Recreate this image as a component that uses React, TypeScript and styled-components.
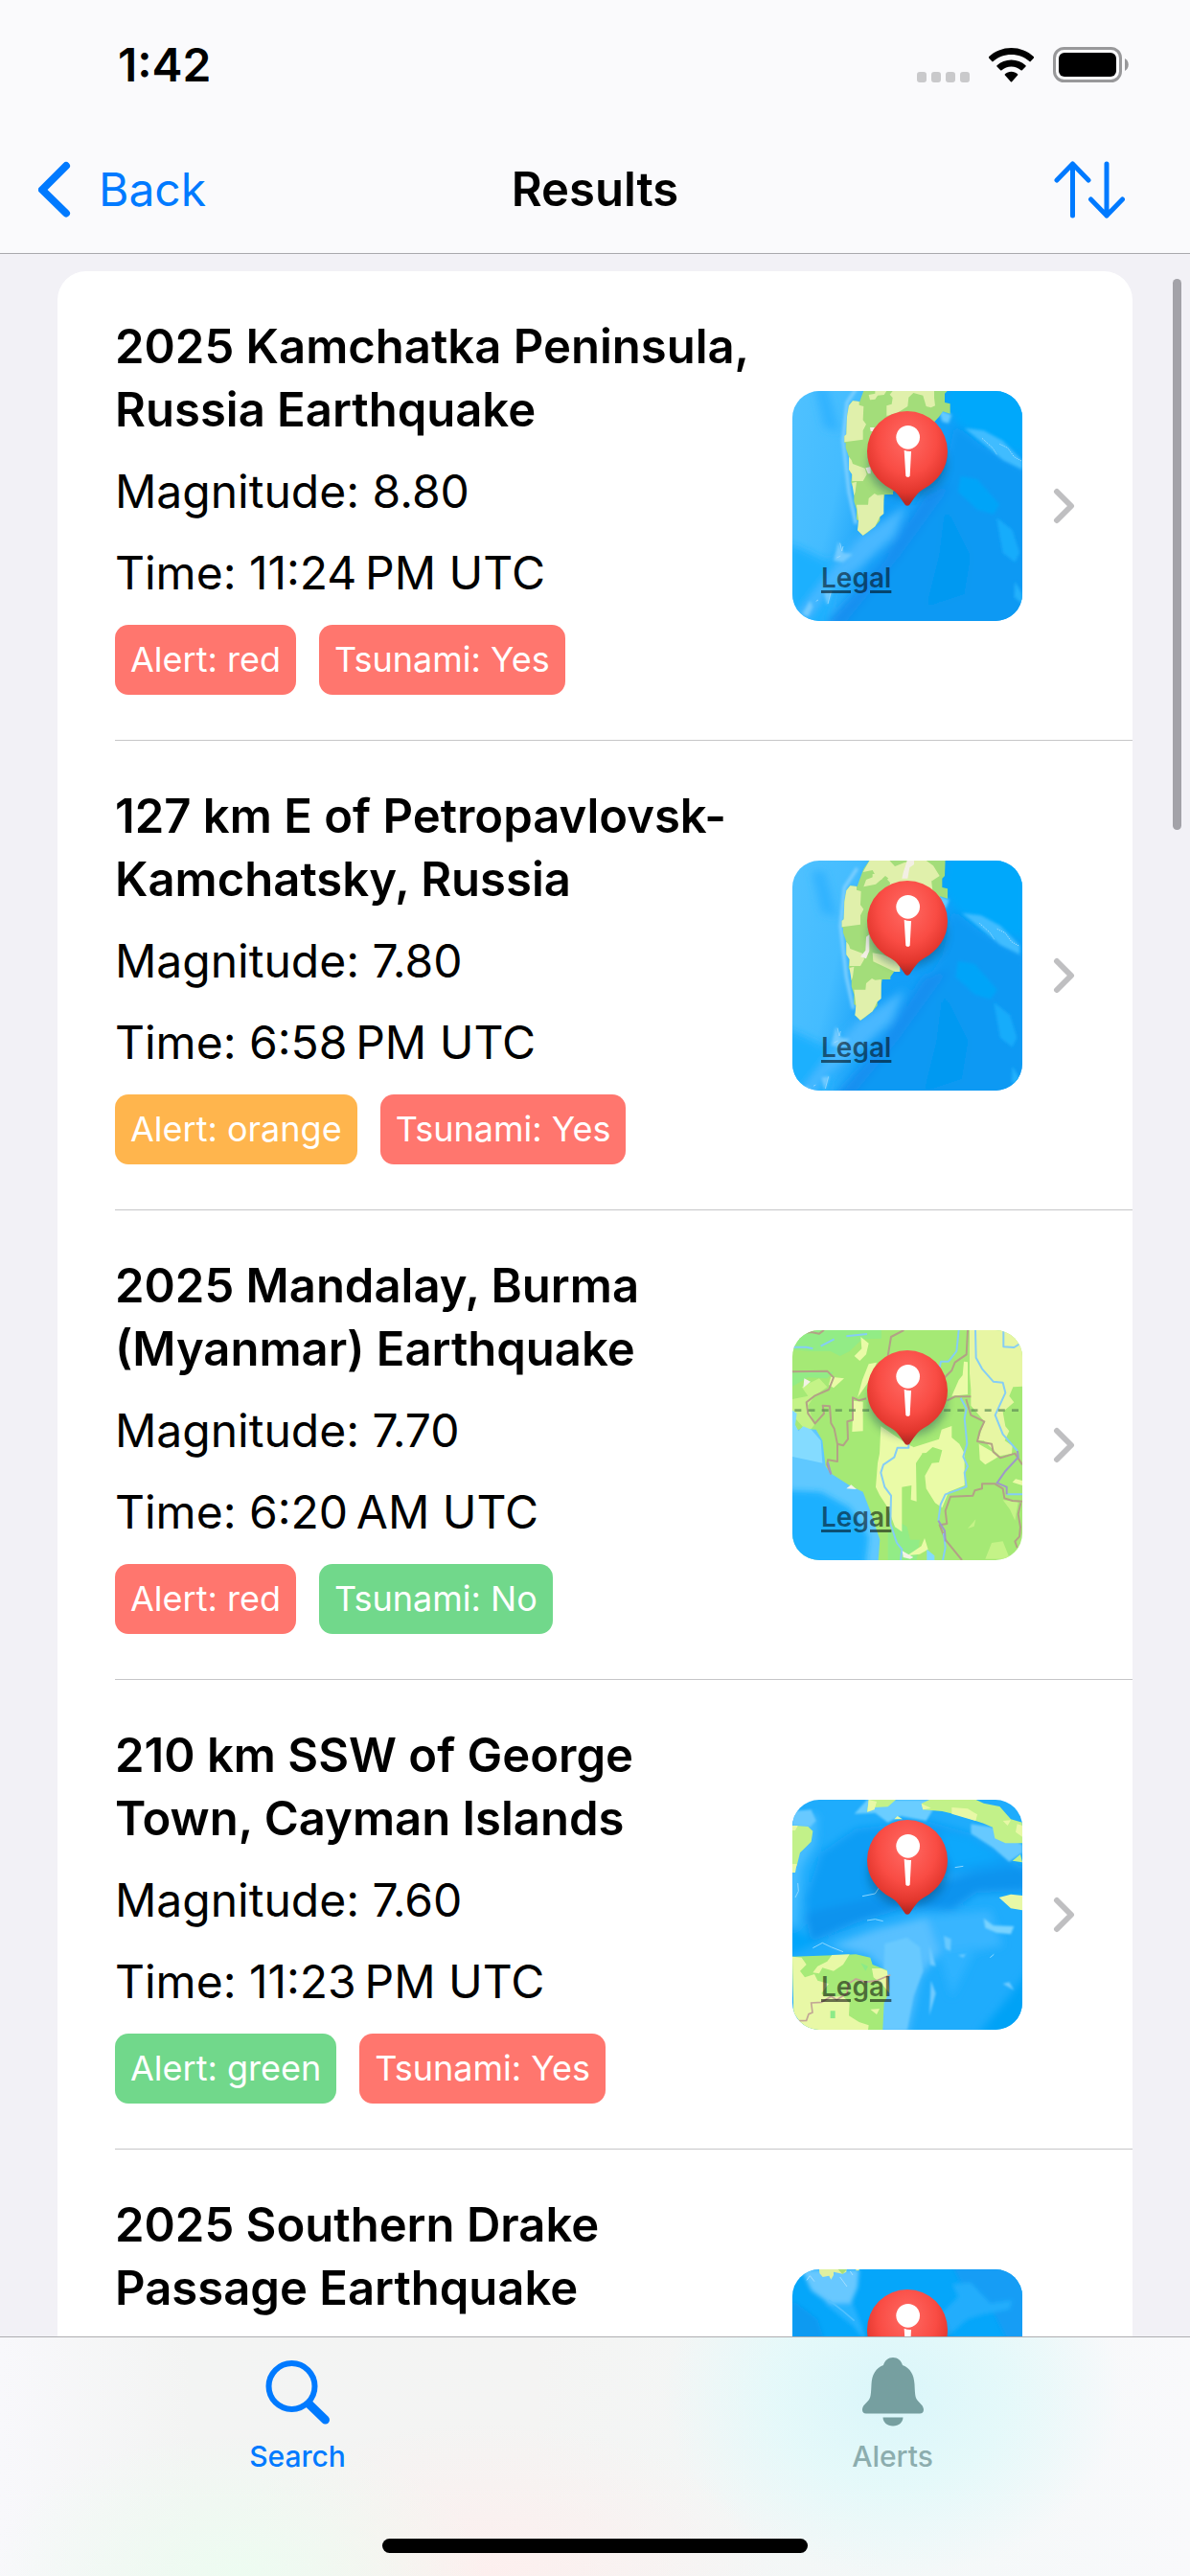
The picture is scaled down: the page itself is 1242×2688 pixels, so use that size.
import React from "react";
import styled, { createGlobalStyle } from "styled-components";

const GlobalStyle = createGlobalStyle`
  *, *::before, *::after { box-sizing: border-box; }
  body {
    margin: 0;
    background: #f2f1f6;
    color: #000;
    font-family: Inter, "Liberation Sans", sans-serif;
    font-size: 48px;
    line-height: 66px;
  }
`;

const BLUE = "#007aff";

const tones = {
  red: "#ff766e",
  orange: "#ffb54d",
  green: "#71d88b",
};

type Tone = keyof typeof tones;
type MapName = "kamchatkaNorth" | "kamchatka" | "burma" | "cayman" | "drake";

interface Quake {
  title: string;
  map: MapName;
  magnitude?: string;
  time?: string;
  alert?: Tone;
  tsunami?: boolean;
}

const quakes: Quake[] = [
  { title: "2025 Kamchatka Peninsula, Russia Earthquake", map: "kamchatka", magnitude: "8.80", time: "11:24\u202fPM UTC", alert: "red", tsunami: true },
  { title: "127 km E of Petropavlovsk-Kamchatsky, Russia", map: "kamchatkaNorth", magnitude: "7.80", time: "6:58\u202fPM UTC", alert: "orange", tsunami: true },
  { title: "2025 Mandalay, Burma (Myanmar) Earthquake", map: "burma", magnitude: "7.70", time: "6:20\u202fAM UTC", alert: "red", tsunami: false },
  { title: "210 km SSW of George Town, Cayman Islands", map: "cayman", magnitude: "7.60", time: "11:23\u202fPM UTC", alert: "green", tsunami: true },
  { title: "2025 Southern Drake Passage Earthquake", map: "drake" },
];

const Screen = styled.div`
  position: relative;
  display: flex;
  flex-direction: column;
  height: 100vh;
  overflow: hidden;
`;

const Header = styled.header`
  flex: none;
  background: #fafafc;
  border-bottom: 1px solid #a9a9ad;
`;

const StatusBar = styled.div`
  display: flex;
  align-items: center;
  justify-content: space-between;
  height: 132px;
  padding: 4px 64px 0 123px;
`;

const Clock = styled.time`
  font-size: 48px;
  font-weight: 600;
`;

const StatusIcons = styled.div`
  display: flex;
  align-items: center;
  gap: 20px;
`;

const NavBar = styled.nav`
  display: grid;
  grid-template-columns: 1fr auto 1fr;
  align-items: center;
  height: 132px;
  padding: 0 40px;
`;

const BackButton = styled.button`
  display: flex;
  align-items: center;
  justify-self: start;
  gap: 28px;
  padding: 0;
  border: 0;
  background: none;
  color: ${BLUE};
  font: inherit;
  cursor: pointer;
`;

const NavTitle = styled.h1`
  margin: 0;
  font-size: 49px;
  font-weight: 600;
`;

const SortButton = styled.button`
  display: flex;
  justify-self: end;
  padding: 0 28px 0 0;
  border: 0;
  background: none;
  color: ${BLUE};
  cursor: pointer;
`;

const Main = styled.main`
  position: relative;
  flex: 1;
  min-height: 0;
  overflow: hidden;
  padding: 18px 60px 0;
`;

const ScrollThumb = styled.div`
  position: absolute;
  top: 26px;
  right: 9px;
  width: 9px;
  height: 575px;
  border-radius: 5px;
  background: #a3a2a8;
`;

const List = styled.ul`
  margin: 0;
  padding: 0;
  list-style: none;
  background: #fff;
  border-radius: 30px 30px 0 0;
`;

const Row = styled.li`
  display: flex;
  align-items: center;
  min-height: 490px;
  margin-left: 60px;
  padding-right: 60px;
  border-bottom: 1px solid #c6c6c8;
`;

const Details = styled.div`
  display: flex;
  flex: 1;
  flex-direction: column;
  align-self: flex-start;
  gap: 19px;
  min-width: 0;
  padding: 46px 24px 46px 0;
`;

const Title = styled.a`
  color: inherit;
  font-size: 49px;
  font-weight: 600;
  text-decoration: none;
`;

const Fact = styled.div``;

const Badges = styled.div`
  display: flex;
  gap: 24px;
  padding-top: 2px;
`;

const Badge = styled.span<{ $tone: Tone }>`
  padding: 0 16px;
  border-radius: 14px;
  background: ${(p) => tones[p.$tone]};
  color: #fff;
  font-size: 36px;
  line-height: 73px;
  white-space: nowrap;
`;

const MapFrame = styled.div`
  position: relative;
  flex: none;
  width: 240px;
  height: 240px;
  margin-right: 32px;
  overflow: hidden;
  border-radius: 28px;

  svg { display: block; }
`;

const LegalLink = styled.a`
  position: absolute;
  left: 30px;
  bottom: 24px;
  color: rgba(0, 0, 0, 0.55);
  font-size: 28px;
  font-weight: 600;
  line-height: 42px;
  text-decoration: underline;
  text-decoration-thickness: 3px;
  text-underline-offset: 3px;
`;

const TabBar = styled.nav`
  flex: none;
  height: 250px;
  border-top: 1px solid #adadb0;
  background:
    radial-gradient(ellipse 240px 190px at 75% 24%, #daf6fa 0%, rgba(226, 249, 250, 0.85) 50%, rgba(240, 249, 249, 0) 100%),
    radial-gradient(ellipse 260px 150px at 20% 100%, #edfcf1 0%, rgba(240, 249, 243, 0) 100%),
    radial-gradient(ellipse 300px 160px at 41% 100%, #fdefee 0%, rgba(248, 243, 242, 0) 100%),
    linear-gradient(90deg, #f8f8fb 0%, #f3f4f3 16%, #f4f4f3 45%, #f3f8f8 75%, #f9f9fb 100%);
  display: flex;
  flex-direction: column;
  justify-content: space-between;
`;

const Tabs = styled.div`
  display: grid;
  grid-template-columns: 1fr 1fr;
`;

const Tab = styled.a<{ $active?: boolean }>`
  display: flex;
  flex-direction: column;
  align-items: center;
  gap: 10px;
  padding-top: 20px;
  color: ${(p) => (p.$active ? BLUE : "#8cadae")};
  font-size: 30px;
  font-weight: 500;
  line-height: 40px;
  text-decoration: none;
`;

const HomeIndicator = styled.div`
  align-self: center;
  width: 444px;
  height: 15px;
  margin-bottom: 24px;
  border-radius: 8px;
  background: #000;
`;

function Pin({ id }: { id: string }) {
  return (
    <g>
      <defs>
        <radialGradient id={`${id}-ball`} cx="0.5" cy="0.3" r="0.66">
          <stop offset="0" stopColor="#ff6a64" />
          <stop offset="0.55" stopColor="#f94c44" />
          <stop offset="0.85" stopColor="#e2362d" />
          <stop offset="1" stopColor="#b92a24" />
        </radialGradient>
        <filter id={`${id}-shade`} x="-30%" y="-30%" width="160%" height="160%">
          <feGaussianBlur stdDeviation="14" />
        </filter>
      </defs>
      <ellipse cx="501" cy="312" rx="122" ry="104" fill="#0b3b52" opacity="0.4" filter={`url(#${id}-shade)`} />
      <path
        d="M501 147a126 126 0 0 1 126 126c0 52-29 92-74 117-20 11-29 27-42 46-5 10-15 10-20 0-13-19-22-35-42-46-45-25-74-65-74-117a126 126 0 0 1 126-126Z"
        fill={`url(#${id}-ball)`}
      />
      <circle cx="503" cy="229" r="37" fill="#fff" />
      <path d="M491 269q11 5 22 4l-4 77q-6 7-13 0Z" fill="#fff" />
    </g>
  );
}

function Kamchatka({ shift }: { shift: boolean }) {
  const id = shift ? "kn" : "ks";
  return (
    <g>
      <defs>
        <linearGradient id={`${id}-sea`} x1="0" y1="0" x2="1" y2="0.25">
          <stop offset="0" stopColor="#4fc1ff" />
          <stop offset="0.28" stopColor="#44bcff" />
          <stop offset="0.5" stopColor="#149ff8" />
          <stop offset="1" stopColor="#0d9ff8" />
        </linearGradient>
        <filter id={`${id}-soft`} x="-30%" y="-30%" width="160%" height="160%">
          <feGaussianBlur stdDeviation="13" />
        </filter>
        <filter id={`${id}-fine`} x="-30%" y="-30%" width="160%" height="160%">
          <feGaussianBlur stdDeviation="5" />
        </filter>
      </defs>
      <rect x="141" y="84" width="720" height="720" fill={`url(#${id}-sea)`} />
      <g transform={shift ? "translate(-8 48)" : undefined}>
        <g filter={`url(#${id}-soft)`}>
          <path d="M640 0H880V290L740 240 660 190 620 130Z" fill="#04a8fb" />
          <path d="M650 190 740 260 880 340V860H240L420 640 540 470 620 330Z" fill="#0f99f3" />
          <path d="M130 560 260 620 320 560 240 830H130Z" fill="#1eb0fe" />
          <path d="M560 400 640 380 480 600 300 820H240L420 620Z" fill="#128ff0" />
          <path d="M620 440 700 600 680 720 560 760 600 600Z" fill="#0399f1" />
          <path d="M350 540 440 480 500 440 460 540 350 640 260 700 190 800 150 790 260 650Z" fill="#49b8ff" />
          <path d="M210 70 250 70 290 210 240 200Z" fill="#32b3ff" />
        </g>
        <g filter={`url(#${id}-fine)`}>
          <path d="M352 60 312 120 300 240 318 400 340 500" stroke="#7fd0ff" strokeWidth="10" fill="none" />
          <path d="M680 200 740 208 800 240 861 302 861 330 800 300 740 250Z" fill="#3fbcff" />
          <path d="M668 350 720 360 790 440 770 470 720 455 660 400Z" fill="#06a4f8" />
          <path d="M780 480 830 520 852 590 838 620 800 590Z" fill="#16acfb" />
          <path d="M838 680 861 720V750L836 730Z" fill="#24b1fc" />
          <path d="M598 140 640 158 630 185 610 180Z" fill="#63caff" />
          <path d="M285 555 300 590 330 595 300 620 270 615ZM172 782 196 740 205 760 190 790ZM240 715 265 710 250 755Z" fill="#72caff" />
        </g>
        <path d="M735 232 768 262 782 284M790 250 815 262 835 290 860 304" fill="none" stroke="#9bdcff" strokeWidth="3" strokeDasharray="4 3" />
        <path d="M290 560 296 585 300 570M280 606 292 600M215 742 222 738M262 712 252 750" fill="none" stroke="#a5deff" strokeWidth="3" opacity="0.7" />
        <path
          d="M372 62 394 30H628L626 84 618 92V120L635 124V155L612 148 600 165 586 180 570 250 490 330 470 380 456 400V408L430 408 427 425 425 468 415 478V490L400 508 385 520 375 528 362 536 345 520 348 510V490L342 486V455L334 430V395L325 370 328 345 318 330V290L308 262V246H304V225L310 220 312 165 318 130 330 115 352 117 358 100Z"
          fill="#a3dd7a"
        />
        <g fill="#e0f0ab">
          <path d="M318 130 330 115 350 117V128L364 132 362 175 372 188 362 208V236L304 244V225L310 220 312 165Z" />
          <path d="M455 84 585 84V105L588 130 575 136 560 132 550 98 520 90 505 104 502 132 470 152 436 162V130L452 125 455 105 446 95Z" />
          <path d="M380 96 400 92 400 78 440 78 428 96 408 98 400 110 384 112Z" />
          <path d="M318 290 326 300 330 312 368 326 374 345 362 366H328V345L318 330Z" />
          <path d="M328 372 342 368 338 400 334 412Z" />
          <path d="M342 440 378 440 380 420 398 405 408 410 427 408V468L415 478 400 508 362 536 345 520 348 490Z" />
          {shift && (
            <>
              <path d="M394 30H448L470 54 500 42 560 30 590 52 610 84 586 100 570 84 560 110 500 130 440 84 410 110 372 118 380 96 410 84 400 66 370 72Z" />
              <path d="M400 325 430 330 486 350V384L470 384 402 352Z" />
            </>
          )}
        </g>
        {shift ? (
          <path d="M508 36h22v12l-14 10-6 34h-18l4-18zM380 275l10-8v52l-10 24-18-6 16-20z" fill="#f3efe4" />
        ) : (
          <path d="M384 198h14v12h-12zM370 325l16-4v22h-8z" fill="#f3efe4" />
        )}
      </g>
    </g>
  );
}

function Burma() {
  return (
    <g>
      <defs>
        <filter id="bu-soft" x="-30%" y="-30%" width="160%" height="160%">
          <feGaussianBlur stdDeviation="10" />
        </filter>
      </defs>
      <rect x="141" y="84" width="720" height="720" fill="#a5e975" />
      <path d="M141 84H420V110L360 112 320 150 290 165 260 150 200 150 141 145ZM141 215H270L250 235 190 232 141 260ZM440 720 470 680 500 700 510 740 540 740 530 804H440Z" fill="#92ec86" />
      <path d="M696 84H861V260L832 262 820 290 835 310 800 340 808 385 820 400 806 430 830 446 828 470 790 478 740 430 722 430 742 370 700 320 700 270 696 220Z" fill="#e7f6a3" />
      <g fill="#eafba7">
        <path d="M418 385 500 440 525 452 548 470 528 500 530 620 512 615 514 570 484 575V715L462 700 440 640 414 600 402 575 408 500 414 470Z" />
        <path d="M640 384 640 420 664 440 680 470 680 570 630 590 610 640 588 625 560 580 556 540 578 500 600 498 610 460 580 450 560 468 520 470 522 450 600 425 608 395Z" />
        <path d="M332 305 362 308V400L328 402Z" />
        <path d="M355 105 380 125 372 160 352 180 335 165 358 142Z" />
        <path d="M678 182 690 184V285L640 290 662 240 674 225Z" />
        <path d="M380 190 405 185 380 245 345 295 360 240Z" />
        <path d="M725 440 790 478 745 505 728 490ZM262 230 303 235 270 265 255 255Z" />
        <path d="M555 735 566 770 540 785 500 790 545 760ZM840 550 861 555V570L830 560Z" />
      </g>
      <path d="M170 262 225 235 250 262 210 290 190 320 210 380 190 405 150 360 141 345V300L190 290ZM765 750 800 745 822 800H745ZM715 676 690 705 710 698ZM800 616 848 622 838 680 822 645Z" fill="#c4f387" />
      <path d="M141 400 175 392 215 395 235 430 245 510 265 535 320 570 362 590 385 650 415 740 410 804H141Z" fill="#5fc8ff" />
      <path d="M141 335 155 345 150 380 160 400 175 385 200 395 230 430 235 500 141 480Z" fill="#84dbff" />
      <path d="M120 585 230 590 320 640 380 730 370 820H120Z" fill="#1bb0ff" filter="url(#bu-soft)" />
      <path d="M562 770 586 790V804H562Z" fill="#83dbff" />
      <g fill="none" stroke="#b3a186" strokeWidth="6" strokeLinejoin="round">
        <path d="M160 95 200 90 225 95 240 84M440 165 450 105 490 84M690 84 686 160 650 185 640 210 610 240M141 214 250 212 270 232 255 270 210 290 185 310 190 345 212 376 240 345 236 320 258 322 262 375 272 392 282 440 300 445 315 425 313 370 330 365V295L350 304 372 298" />
        <path d="M282 440V495L252 490 250 505 262 535M625 305 650 292 700 292M685 300 700 350 742 370 728 400 720 432 765 440 770 465 792 484 838 470 861 505" />
        <path d="M861 620 830 618 805 610 800 580 775 565 735 565 735 580 712 586 706 602 636 605 620 650 625 690 602 694 620 740 672 804M856 625 848 660 855 700 852 730 838 745 845 765" />
      </g>
      <g fill="none" stroke="#85cdf6" strokeWidth="6" strokeLinejoin="round">
        <path d="M141 137H185L205 142M230 134 272 112M310 103 375 96M662 84 655 150 630 182 606 182 602 200M714 84 716 170 735 205 770 245 800 248 808 280 776 350 800 410 846 462M802 84V136L835 138 854 126" />
        <path d="M668 296 686 330 680 360 688 440 676 480 690 510 680 530 686 574 620 598 605 630 598 680M505 440V452H470L460 482 426 505 418 530 430 575 450 602 448 690 468 750 484 770 480 804M812 598H861M615 720 620 765 612 804" />
      </g>
      <path d="M598 680 618 712 620 745M846 462 848 482 808 525 782 562 812 575 812 598M252 498 262 535" fill="none" stroke="#9e98c8" strokeWidth="6" />
      <path d="M148 335H861" stroke="#5f8d55" strokeOpacity="0.7" strokeWidth="8" strokeDasharray="21 21.5" />
      <path d="M178 235 198 245 175 265ZM310 580 325 568 342 582ZM485 775 520 795 510 800 488 795Z" fill="#f3f3e6" />
    </g>
  );
}

function Cayman() {
  return (
    <g>
      <defs>
        <filter id="ca-soft" x="-30%" y="-30%" width="160%" height="160%">
          <feGaussianBlur stdDeviation="12" />
        </filter>
        <filter id="ca-fine" x="-30%" y="-30%" width="160%" height="160%">
          <feGaussianBlur stdDeviation="3" />
        </filter>
      </defs>
      <rect x="141" y="84" width="720" height="720" fill="#1facfc" />
      <g filter="url(#ca-soft)">
        <path d="M230 250 340 175 560 150 700 190 840 280 861 300 600 320 420 380 200 480 180 400Z" fill="#0f9df5" />
        <path d="M600 180 700 200 800 270 640 300Z" fill="#10a8fc" />
        <path d="M180 440 260 420 400 390 560 350 700 315 880 290V370L720 375 640 430 500 420 340 470 200 530Z" fill="#0d93ee" />
        <path d="M130 480 220 530 130 570Z" fill="#04a4fa" />
        <path d="M120 150 220 130 215 220 170 300 155 480 130 480Z" fill="#44bcff" />
        <path d="M260 540 400 490 560 450 620 540 540 640 500 820H410L430 620 380 570Z" fill="#59c0ff" />
        <path d="M560 450 760 430 800 540 700 560 600 560Z" fill="#39b5ff" />
        <path d="M820 700 880 620V820H720Z" fill="#06a2f6" />
        <path d="M600 560 720 540 640 700Z" fill="#2fb3ff" />
      </g>
      <g filter="url(#ca-fine)">
        <path d="M375 84H600L560 150 480 135 440 155 400 125 335 128Z" fill="#6bcdff" />
        <path d="M700 160 770 170 861 225V250L820 278 770 235 700 190Z" fill="#66c9ff" />
        <path d="M740 455 770 478 835 480 825 505 780 500 745 485Z" fill="#79d3ff" />
        <path d="M141 120 200 115 215 150 195 170 141 165ZM615 510 638 520 636 558 620 550ZM430 535 500 515 540 545 550 620 520 700 500 804H420Z" fill="#68c9ff" />
        <path d="M570 540 590 605 572 600ZM575 650 590 690 570 760ZM820 655 835 680 800 660ZM660 570 685 568 675 578Z" fill="#6fcbff" />
      </g>
      <path d="M150 165 190 168 205 182 200 215 185 230 165 250 155 290 141 305V175ZM380 84H465L440 106 400 108 375 122ZM545 96 570 84H716L740 95 790 105 825 145 861 155V220H808L775 205 768 170 740 158 700 145 660 132 610 120 550 115ZM830 275 855 255 861 280Z" fill="#c2f189" />
      <path d="M141 575 290 570 340 568 385 578 392 600 438 618V700L428 720 424 804H195L165 780 145 750Z" fill="#a6ea78" />
      <g fill="#e8f8a6">
        <path d="M141 575 170 578 185 600 165 620 180 640 210 630 220 650 255 660 232 690 240 700 300 700 320 720 318 760 350 780 380 790 378 804H195L165 780 145 750Z" />
        <path d="M265 570 320 568 300 600 270 620 235 610 225 628 205 625 220 605 250 590ZM390 612 420 612 438 620 446 690 420 660 395 640ZM385 740 414 738 405 756ZM640 108 690 112 720 130 715 150 640 128ZM800 150 825 148 815 165ZM845 160 861 165V200L840 185ZM788 390 825 380 861 384V430L825 424ZM460 145 470 135 486 145ZM380 84 405 90 398 115 376 122ZM545 96 575 110 550 115ZM141 165H158L150 180H141ZM141 285H155L150 312H141Z" />
      </g>
      <path d="M355 595 378 605 370 620ZM260 745H275V768H260Z" fill="#8cea88" />
      <path d="M160 776 185 775 192 755 204 750 200 720 232 718 262 700 280 710 312 690 316 660 340 645 370 655 405 650 448 632" fill="none" stroke="#c2a795" strokeWidth="5" />
      <path d="M650 296 676 292M150 390 160 370 158 345M375 462 400 458 425 464M205 548 235 532 262 545 300 560M360 386 400 378 412 360M760 578 772 568" fill="none" stroke="#8fd8ff" strokeWidth="3" />
    </g>
  );
}

function Drake() {
  return (
    <g>
      <defs>
        <filter id="dr-soft" x="-30%" y="-30%" width="160%" height="160%">
          <feGaussianBlur stdDeviation="7" />
        </filter>
      </defs>
      <rect x="141" y="84" width="720" height="720" fill="#05a6fa" />
      <g filter="url(#dr-soft)">
        <path d="M640 70H880V320H820L760 200 690 170Z" fill="#129df5" />
        <path d="M141 180 220 240 240 300H141Z" fill="#099af1" />
        <path d="M640 130 700 125 760 190 830 180 820 210 740 225 690 240 620 300 600 230 660 170Z" fill="#20adfc" />
        <path d="M170 84H350L345 140 320 200 270 200 200 150Z" fill="#68c8ff" />
        <path d="M240 190 330 190 380 320 330 260Z" fill="#28b2fe" />
      </g>
      <path d="M255 180 300 215 335 245" fill="none" stroke="#51c1ff" strokeWidth="5" />
      <path d="M225 84H310V92L298 98 270 92V102L262 116 256 104 236 108 226 96ZM340 84H350V88H340Z" fill="#e0f0a0" />
      <path d="M284 84H312L298 99Z" fill="#a9df77" />
      <path d="M186 118 196 104 210 122M290 108 312 138M330 102 322 90" fill="none" stroke="#a4deff" strokeWidth="3" />
    </g>
  );
}

function MapArt({ name }: { name: MapName }) {
  return (
    <svg viewBox="141 84 720 720" width="240" height="240" aria-hidden="true">
      {name === "kamchatka" && <Kamchatka shift={false} />}
      {name === "kamchatkaNorth" && <Kamchatka shift />}
      {name === "burma" && <Burma />}
      {name === "cayman" && <Cayman />}
      {name === "drake" && <Drake />}
      <Pin id={`pin-${name}`} />
    </svg>
  );
}

function Disclosure() {
  return (
    <svg width="23" height="38" viewBox="0 0 23 38" fill="none" stroke="#bfbfc1" strokeWidth="6" strokeLinecap="round" strokeLinejoin="round" aria-hidden="true">
      <path d="M4 4l15 15-15 15" />
    </svg>
  );
}

function QuakeRow({ quake }: { quake: Quake }) {
  return (
    <Row>
      <Details>
        <Title href="#details">{quake.title}</Title>
        {quake.magnitude && <Fact>Magnitude: {quake.magnitude}</Fact>}
        {quake.time && <Fact>Time: {quake.time}</Fact>}
        {quake.alert && (
          <Badges>
            <Badge $tone={quake.alert}>Alert: {quake.alert}</Badge>
            <Badge $tone={quake.tsunami ? "red" : "green"}>Tsunami: {quake.tsunami ? "Yes" : "No"}</Badge>
          </Badges>
        )}
      </Details>
      <MapFrame>
        <MapArt name={quake.map} />
        {quake.magnitude && <LegalLink href="#legal">Legal</LegalLink>}
      </MapFrame>
      <Disclosure />
    </Row>
  );
}

export default function App() {
  return (
    <Screen>
      <GlobalStyle />
      <Header>
        <StatusBar>
          <Clock>1:42</Clock>
          <StatusIcons>
            <svg width="55" height="38" viewBox="0 0 55 38" fill="#c9c9cb" aria-hidden="true">
              <rect x="0" y="26" width="10" height="11" rx="3" />
              <rect x="15" y="26" width="10" height="11" rx="3" />
              <rect x="30" y="26" width="10" height="11" rx="3" />
              <rect x="45" y="26" width="10" height="11" rx="3" />
            </svg>
            <svg width="47" height="38" viewBox="0 0 47 38" aria-hidden="true">
              <path d="M23.500 1C32.500 1 40.800 4.400 47 10.300c.4.400.4.900 0 1.300l-3.300 3.500c-.4.400-.9.400-1.300 0C37.300 10.600 30.700 8 23.500 8S9.700 10.600 4.600 15.100c-.4.400-.9.400-1.300 0L0 11.600c-.4-.4-.4-.9 0-1.300C6.200 4.400 14.500 1 23.500 1Z" />
              <path d="M23.500 13.400c5.700 0 11 2.100 15 5.800.4.400.4.900 0 1.300l-3.700 3.700c-.4.400-.9.400-1.300 0-2.700-2.400-6.200-3.800-10-3.800s-7.300 1.400-10 3.800c-.4.400-.9.400-1.300 0l-3.700-3.700c-.4-.4-.4-.9 0-1.300 4-3.700 9.300-5.800 15-5.800Z" />
              <path d="M23.500 25.800c2.500 0 4.800.9 6.600 2.400.4.400.4.900 0 1.300l-6 6.800c-.3.400-.9.400-1.200 0l-6-6.800c-.4-.4-.4-.9 0-1.300 1.800-1.500 4.100-2.400 6.600-2.400Z" />
            </svg>
            <svg width="79" height="38" viewBox="0 0 79 38" aria-hidden="true">
              <rect x="1.500" y="1.500" width="69" height="34" rx="10" fill="none" stroke="#98989a" strokeWidth="3" />
              <rect x="6" y="6" width="60" height="25" rx="6" />
              <path d="M75 12c5 2.500 5 10.500 0 13Z" fill="#98989a" />
            </svg>
          </StatusIcons>
        </StatusBar>
        <NavBar>
          <BackButton type="button">
            <svg width="35" height="66" viewBox="0 0 35 66" fill="none" stroke="currentColor" strokeWidth="8" strokeLinecap="round" strokeLinejoin="round" aria-hidden="true">
              <path d="M29 8L4 33l25 24.500" />
            </svg>
            Back
          </BackButton>
          <NavTitle>Results</NavTitle>
          <SortButton type="button" aria-label="Sort results">
            <svg width="74" height="60" viewBox="0 0 74 60" fill="none" stroke="currentColor" strokeWidth="5" strokeLinecap="round" strokeLinejoin="round" aria-hidden="true">
              <path d="M19.500 57V3M3 20L19.500 3L36 20M55 3v54M38.500 40L55 57L71.500 40" />
            </svg>
          </SortButton>
        </NavBar>
      </Header>
      <Main>
        <List>
          {quakes.map((quake) => (
            <QuakeRow key={quake.title} quake={quake} />
          ))}
        </List>
        <ScrollThumb />
      </Main>
      <TabBar>
        <Tabs>
          <Tab href="#search" $active>
            <svg width="68" height="74" viewBox="0 0 68 74" fill="none" stroke="currentColor" strokeLinecap="round" aria-hidden="true">
              <circle cx="27.500" cy="31" r="24" strokeWidth="6" />
              <path d="M46 50L62.500 66" strokeWidth="9" />
            </svg>
            Search
          </Tab>
          <Tab href="#alerts">
            <svg width="66" height="74" viewBox="0 0 66 74" fill="#769fa0" aria-hidden="true">
              <path d="M33 1c5 0 8.500 3 10 8 8 3 12 10 12.500 20 .5 9 .5 13 2.500 16 2.500 3.500 7 6 7 10.500 0 2.500-1.500 4-4 4H5c-2.500 0-4-1.500-4-4C1 51 5.500 48.500 8 45c2-3 2-7 2.500-16C11 19 15 12 23 9c1.500-5 5-8 10-8Z" />
              <path d="M22.500 63.500h21c0 5-4.500 9-10.500 9s-10.500-4-10.500-9Z" />
            </svg>
            Alerts
          </Tab>
        </Tabs>
        <HomeIndicator />
      </TabBar>
    </Screen>
  );
}
